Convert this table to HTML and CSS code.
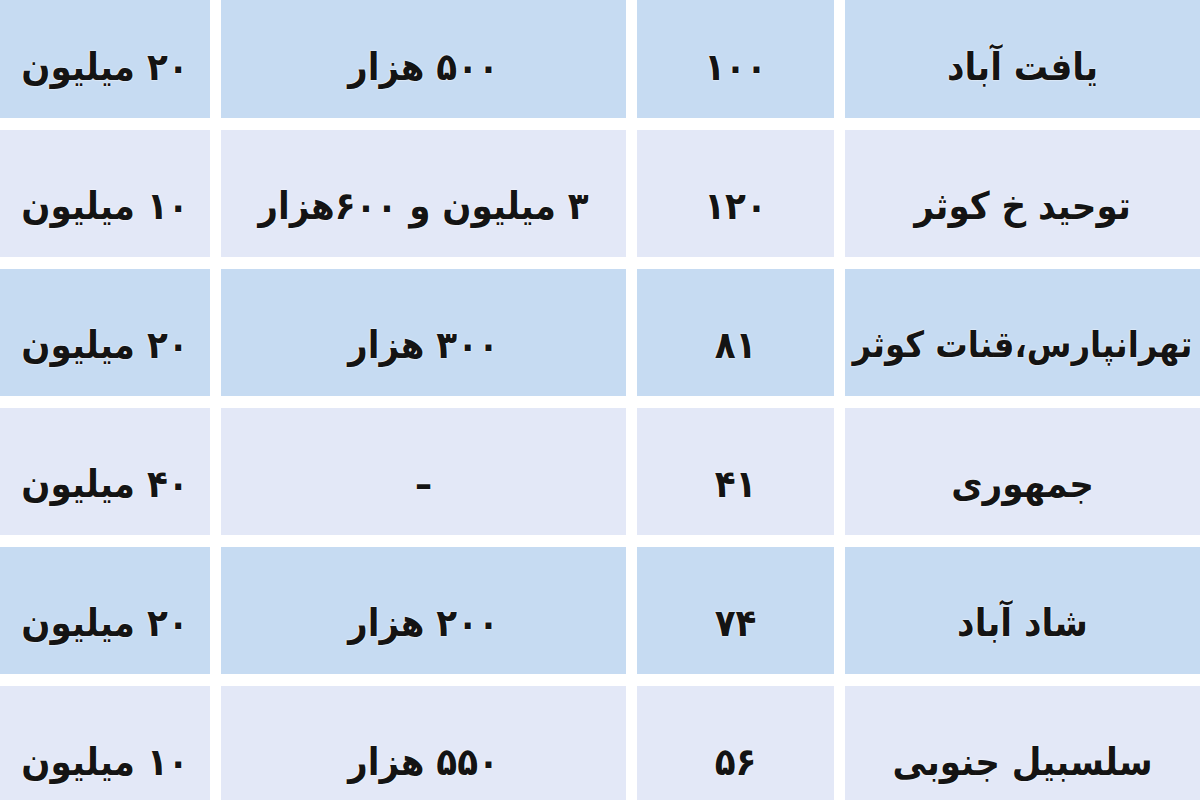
FILE: index.html
```html
<!DOCTYPE html>
<html lang="fa" dir="rtl">
<head>
<meta charset="utf-8">
<title>جدول اجاره</title>
<link rel="stylesheet" href="styles.css">
</head>
<body>
<div class="table">
  <div class="cell blue">یافت آباد</div>
  <div class="cell blue">۱۰۰</div>
  <div class="cell blue">۵۰۰ هزار</div>
  <div class="cell blue">۲۰ میلیون</div>

  <div class="cell light">توحید خ کوثر</div>
  <div class="cell light">۱۲۰</div>
  <div class="cell light">۳ میلیون و ۶۰۰هزار</div>
  <div class="cell light">۱۰ میلیون</div>

  <div class="cell blue long">تهرانپارس،قنات کوثر</div>
  <div class="cell blue">۸۱</div>
  <div class="cell blue">۳۰۰ هزار</div>
  <div class="cell blue">۲۰ میلیون</div>

  <div class="cell light">جمهوری</div>
  <div class="cell light">۴۱</div>
  <div class="cell light">–</div>
  <div class="cell light">۴۰ میلیون</div>

  <div class="cell blue">شاد آباد</div>
  <div class="cell blue">۷۴</div>
  <div class="cell blue">۲۰۰ هزار</div>
  <div class="cell blue">۲۰ میلیون</div>

  <div class="cell light">سلسبیل جنوبی</div>
  <div class="cell light">۵۶</div>
  <div class="cell light">۵۵۰ هزار</div>
  <div class="cell light">۱۰ میلیون</div>
</div>
</body>
</html>
```
FILE: styles.css
```css
html, body {
  margin: 0;
  padding: 0;
  background: #ffffff;
  overflow: hidden;
  height: 800px;
}
body {
  font-family: "DejaVu Sans Condensed", "DejaVu Sans", sans-serif;
}
.table {
  direction: rtl;
  display: grid;
  grid-template-columns: 355px 197px 405px 210px;
  grid-auto-rows: 127px;
  column-gap: 11px;
  row-gap: 12px;
  margin-top: -9px;
  width: 1200px;
}
.cell {
  display: flex;
  align-items: center;
  justify-content: center;
  padding-top: 24px;
  box-sizing: border-box;
  font-size: 38px;
  font-weight: bold;
  color: #141414;
  text-shadow: 0 0 2px #ffffff, 0 0 1px #ffffff;
  white-space: nowrap;
}
.long {
  font-size: 36px;
}
.blue {
  background: #c6dbf2;
}
.light {
  background: #e3e8f7;
}
```
